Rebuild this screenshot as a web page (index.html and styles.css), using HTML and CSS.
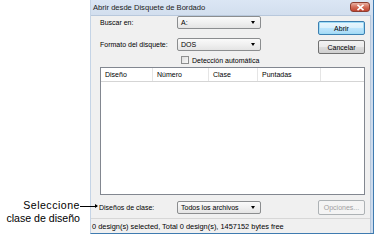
FILE: index.html
```html
<!DOCTYPE html>
<html lang="es">
<head>
<meta charset="utf-8">
<title>Abrir desde Disquete de Bordado</title>
<link rel="stylesheet" href="styles.css">
</head>
<body>
<div class="page">
  <div class="callout">
    <div class="callout-text">
      <span class="callout-line1">Seleccione<span class="arrow"></span></span>
      <span>clase de diseño</span>
    </div>
  </div>
  <div class="dialog">
    <div class="titlebar">
      <span class="title">Abrir desde Disquete de Bordado</span>
      <span class="close"><svg width="9" height="7" viewBox="0 0 9 7"><path d="M1.5 0.8 L7.5 6.2 M7.5 0.8 L1.5 6.2" stroke="#fff" stroke-width="1.6"/></svg></span>
    </div>
    <div class="client">
      <div class="body">
        <div class="top">
          <div class="form">
            <div class="row">
              <span class="label">Buscar en:</span>
              <div class="combo"><span>A:</span><span class="tri"></span></div>
            </div>
            <div class="row row2">
              <span class="label">Formato del disquete:</span>
              <div class="combo"><span>DOS</span><span class="tri"></span></div>
            </div>
            <div class="check-row">
              <span class="checkbox"></span>
              <span>Detección automática</span>
            </div>
          </div>
          <div class="buttons">
            <div class="btn default">Abrir</div>
            <div class="btn">Cancelar</div>
          </div>
        </div>
        <div class="list">
          <div class="list-head">
            <span class="col c1">Diseño</span>
            <span class="col c2">Número</span>
            <span class="col c3">Clase</span>
            <span class="col c4">Puntadas</span>
            <span class="col c5"></span>
          </div>
        </div>
        <div class="bottom">
          <span class="label">Diseños de clase:</span>
          <div class="combo"><span>Todos los archivos</span><span class="tri"></span></div>
          <div class="btn disabled">Opciones...</div>
        </div>
      </div>
      <div class="status">0 design(s) selected, Total 0 design(s), 1457152 bytes free</div>
    </div>
  </div>
</div>
</body>
</html>
```

FILE: styles.css
```css
html, body {
  margin: 0;
  padding: 0;
  background: #ffffff;
}

.page {
  width: 382px;
  height: 247px;
  display: flex;
  align-items: flex-start;
  font-family: "Liberation Sans", Arial, sans-serif;
  overflow: hidden;
}

.callout {
  width: 90px;
  flex: none;
  padding-top: 199px;
}

.callout-text {
  display: flex;
  flex-direction: column;
  align-items: flex-end;
  padding-right: 10px;
  font-size: 10.6px;
  line-height: 13px;
  color: #000;
}

.callout-line1 {
  position: relative;
  letter-spacing: 0.5px;
}

.arrow {
  position: absolute;
  left: 100%;
  top: 7px;
  width: 17px;
  height: 1px;
  background: #000;
}

.arrow::after {
  content: "";
  position: absolute;
  right: -1px;
  top: -2px;
  border-left: 3px solid #000;
  border-top: 2.5px solid transparent;
  border-bottom: 2.5px solid transparent;
}

.dialog {
  width: 284px;
  height: 234px;
  flex: none;
  box-sizing: border-box;
  display: flex;
  flex-direction: column;
  background: linear-gradient(#dbe6f4, #cfdcec 20px, #cddbed);
  border-right: 1px solid #3f7bb0;
  border-bottom: 1px solid #3f7bb0;
  border-left: 1px solid #c5d4e6;
  font-size: 7px;
  color: #000;
}

.titlebar {
  height: 15px;
  flex: none;
  display: flex;
  align-items: center;
  justify-content: space-between;
  padding-left: 2px;
}

.title {
  font-size: 7.6px;
  color: #1a1a1a;
}

.close {
  width: 20px;
  height: 10px;
  margin-right: 3px;
  margin-top: -1px;
  box-sizing: border-box;
  border: 1px solid #8d3d30;
  border-radius: 3px;
  background: linear-gradient(#eab0a2, #d36d5a 50%, #c0432f);
  display: flex;
  align-items: center;
  justify-content: center;
}

.client {
  flex: 1;
  display: flex;
  flex-direction: column;
  margin-right: 2px;
  background: #f0f0f0;
  border-top: 1px solid #b8c8dc;
  border-right: 1px solid #b8c8dc;
}

.body {
  flex: 1;
  padding: 0 5px 0 9px;
  display: flex;
  flex-direction: column;
}

.top {
  display: flex;
  justify-content: space-between;
  height: 50px;
}

.form {
  display: flex;
  flex-direction: column;
}

.row {
  display: flex;
  align-items: center;
  height: 13px;
}

.row2 {
  margin-top: 9px;
}

.label {
  width: 77px;
  flex: none;
}

.combo {
  width: 84px;
  height: 13px;
  box-sizing: border-box;
  border: 1px solid #8b8d8f;
  border-radius: 2px;
  background: linear-gradient(#fafafa, #f0f0f0 50%, #e4e4e4);
  display: flex;
  align-items: center;
  justify-content: space-between;
  padding: 0 5px 0 3px;
}

.tri {
  width: 0;
  height: 0;
  border-top: 3px solid #000;
  border-left: 2.5px solid transparent;
  border-right: 2.5px solid transparent;
}

.check-row {
  display: flex;
  align-items: center;
  margin-top: 5px;
  margin-left: 81px;
  height: 8px;
}

.checkbox {
  width: 8px;
  height: 8px;
  box-sizing: border-box;
  border: 1px solid #8e8f8f;
  background: linear-gradient(135deg, #dcdcdc, #fafafa);
  margin-right: 3px;
}

.buttons {
  display: flex;
  flex-direction: column;
  padding-top: 5px;
  gap: 5px;
}

.btn {
  width: 47px;
  height: 14px;
  box-sizing: border-box;
  border: 1px solid #707070;
  border-radius: 2px;
  background: linear-gradient(#f2f2f2, #ebebeb 50%, #dddddd 50%, #cfcfcf);
  display: flex;
  align-items: center;
  justify-content: center;
}

.btn.default {
  border-color: #3c7fb1;
  box-shadow: inset 0 0 0 1px #9fdcf6;
  background: linear-gradient(#eaf6fd, #d9f0fc 50%, #bee6fd 50%, #a7d9f5);
}

.btn.disabled {
  border-color: #adb2b5;
  background: #f4f4f4;
  color: #a0a0a0;
  height: 15px;
}

.list {
  height: 128px;
  box-sizing: border-box;
  margin-top: 1px;
  border: 1px solid #828790;
  background: #fff;
}

.list-head {
  display: flex;
  height: 13px;
  border-bottom: 1px solid #d5d5d5;
}

.col {
  display: flex;
  align-items: center;
  padding-left: 4px;
  box-sizing: border-box;
  border-right: 1px solid #e5e5e5;
}

.c1 { width: 52px; }
.c2 { width: 56px; }
.c3 { width: 49px; }
.c4 { width: 63px; }
.c5 { flex: 1; border-right: none; }

.bottom {
  display: flex;
  align-items: center;
  margin-top: 5px;
  height: 15px;
}

.bottom .label {
  margin-left: -1px;
  width: 78px;
}

.bottom .btn {
  margin-left: auto;
}

.status {
  height: 14px;
  flex: none;
  margin-top: 3px;
  border-top: 1px solid #d7d7d7;
  display: flex;
  align-items: center;
  padding-left: 1px;
  background: #f0f0f0;
  font-size: 7.4px;
}
```
